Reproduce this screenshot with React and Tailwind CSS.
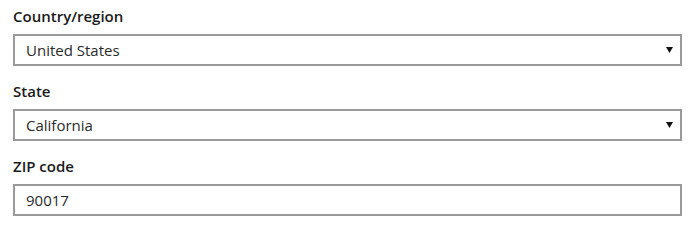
import React from "react";

const Field = ({ label, value, select }) => (
  <div className="flex flex-col">
    <label className="text-[15px] font-semibold leading-[20px] text-[#1a1a1a] mb-[8px]">
      {label}
    </label>
    <div className="h-[32px] border-2 border-[#9a9a9a] bg-white flex items-center justify-between pl-[11px] pr-[7px]">
      <span className="text-[15px] text-[#2a2a2a]">{value}</span>
      {select && (
        <svg width="7" height="6" viewBox="0 0 7 6" className="text-[#111]">
          <path d="M0 0 H7 L3.5 6 Z" fill="currentColor" />
        </svg>
      )}
    </div>
  </div>
);

export default function App() {
  return (
    <div
      className="w-[700px] h-[233px] bg-white pl-[13px] pr-[18px] pt-[6px] flex flex-col gap-[15px]"
      style={{ fontFamily: '"Open Sans", "Noto Sans", sans-serif' }}
    >
      <Field label="Country/region" value="United States" select />
      <Field label="State" value="California" select />
      <Field label="ZIP code" value="90017" />
    </div>
  );
}
